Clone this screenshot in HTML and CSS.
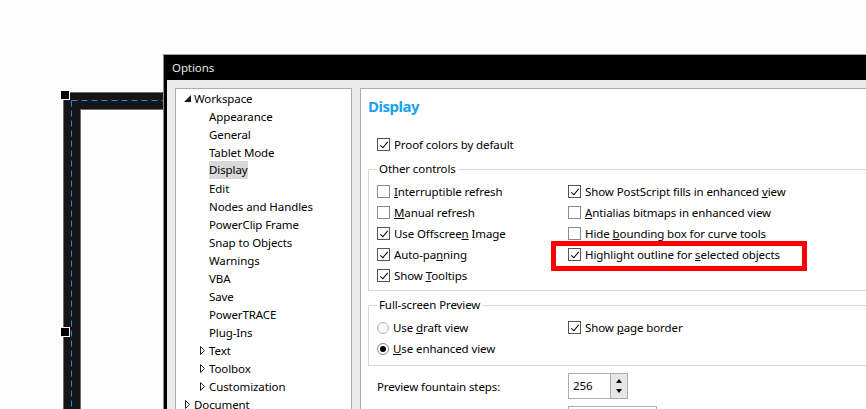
FILE: index.html
```html
<!DOCTYPE html>
<html>
<head>
    <link rel="stylesheet" href="styles.css">
</head>
<body>
    <div class="frame"></div>
    <svg class="frame-path" width="100" height="310">
        <path d="M0.5 0.5 H100 M0.5 0.5 V310" />
    </svg>
    <span class="handle handle-top"></span>
    <span class="handle handle-mid"></span>

    <div class="dialog">
        <div class="titlebar">Options</div>
        <div class="dialog-body">
            <ul class="tree">
                <li>
                    <div class="item">
                        <svg class="toggle open" width="7" height="7"><path d="M7 0V7H0Z" /></svg>Workspace
                    </div>
                    <ul>
                        <li class="item leaf">Appearance</li>
                        <li class="item leaf">General</li>
                        <li class="item leaf">Tablet Mode</li>
                        <li class="item leaf"><span class="selected">Display</span></li>
                        <li class="item leaf">Edit</li>
                        <li class="item leaf">Nodes and Handles</li>
                        <li class="item leaf">PowerClip Frame</li>
                        <li class="item leaf">Snap to Objects</li>
                        <li class="item leaf">Warnings</li>
                        <li class="item leaf">VBA</li>
                        <li class="item leaf">Save</li>
                        <li class="item leaf">PowerTRACE</li>
                        <li class="item leaf">Plug-Ins</li>
                        <li class="item"><svg class="toggle" width="5" height="9"><path d="M0.5 0.5L4.5 4.5L0.5 8.5Z" /></svg>Text</li>
                        <li class="item"><svg class="toggle" width="5" height="9"><path d="M0.5 0.5L4.5 4.5L0.5 8.5Z" /></svg>Toolbox</li>
                        <li class="item"><svg class="toggle" width="5" height="9"><path d="M0.5 0.5L4.5 4.5L0.5 8.5Z" /></svg>Customization</li>
                    </ul>
                </li>
                <li>
                    <div class="item"><svg class="toggle" width="5" height="9"><path d="M0.5 0.5L4.5 4.5L0.5 8.5Z" /></svg>Document</div>
                </li>
            </ul>

            <div class="page">
                <h1>Display</h1>
                <label class="row proof"><span class="cb checked"></span><span>Proof colors by default</span></label>

                <fieldset>
                    <legend>Other controls</legend>
                    <div class="cols">
                        <div class="col">
                            <label class="row"><span class="cb"></span><span><u>I</u>nterruptible refresh</span></label>
                            <label class="row"><span class="cb"></span><span><u>M</u>anual refresh</span></label>
                            <label class="row"><span class="cb checked"></span><span>Use Offscree<u>n</u> Image</span></label>
                            <label class="row"><span class="cb checked"></span><span>Auto-pa<u>n</u>ning</span></label>
                            <label class="row"><span class="cb checked"></span><span>Show <u>T</u>ooltips</span></label>
                        </div>
                        <div class="col">
                            <label class="row"><span class="cb checked"></span><span>Show PostScript fills in enhanced <u>v</u>iew</span></label>
                            <label class="row"><span class="cb"></span><span><u>A</u>ntialias bitmaps in enhanced view</span></label>
                            <label class="row"><span class="cb"></span><span>Hide <u>b</u>ounding box for curve tools</span></label>
                            <label class="row"><span class="cb checked"></span><span>Highlight outline for <u>s</u>elected objects</span></label>
                        </div>
                    </div>
                </fieldset>

                <fieldset class="preview">
                    <legend>Full-screen Preview</legend>
                    <div class="cols">
                        <div class="col">
                            <label class="row"><span class="rb"></span><span>Use <u>d</u>raft view</span></label>
                            <label class="row"><span class="rb checked"></span><span><u>U</u>se enhanced view</span></label>
                        </div>
                        <div class="col">
                            <label class="row"><span class="cb checked"></span><span>Show <u>p</u>age border</span></label>
                        </div>
                    </div>
                </fieldset>

                <div class="field">
                    <span class="field-label">Preview fountain steps:</span>
                    <div class="spin">
                        <span class="spin-value">256</span>
                        <span class="spin-buttons"><i class="up"></i><i class="down"></i></span>
                    </div>
                </div>
                <div class="field next">
                    <span class="field-label"></span>
                    <div class="box"></div>
                </div>
            </div>
        </div>
    </div>

    <div class="callout"></div>
</body>
</html>
```

FILE: styles.css
```css
body {
    margin: 0;
    height: 409px;
    overflow: hidden;
    position: relative;
    background-color: #fdfdfd;
    font-family: "Noto Sans", sans-serif;
    font-size: 11.5px;
    letter-spacing: -0.1px;
    color: #000;
}

/* drawing canvas behind the dialog */
.frame {
    position: absolute;
    left: 63px;
    top: 92px;
    width: 300px;
    height: 400px;
    border: 17px solid #151515;
    outline: 1px solid #6e6e6e;
    outline-offset: -1px;
    box-shadow: inset 0 0 0 1px #6e6e6e;
}
.frame-path {
    position: absolute;
    left: 71px;
    top: 100px;
}
.frame-path path {
    fill: none;
    stroke: #1e8ae6;
    stroke-width: 1;
    stroke-dasharray: 6 4;
}
.handle {
    position: absolute;
    width: 8px;
    height: 8px;
    background-color: #000;
    border: 1px solid #fff;
}
.handle-top {
    left: 60px;
    top: 90px;
}
.handle-mid {
    left: 60px;
    top: 327px;
}

/* options window */
.dialog {
    position: absolute;
    left: 163px;
    top: 54px;
    width: 760px;
    height: 400px;
    background-color: #000;
    border-top: 1px solid #a3a3a3;
    border-left: 1px solid #8c8c8c;
    display: flex;
    flex-direction: column;
}
.titlebar {
    height: 25px;
    line-height: 25px;
    padding-left: 8px;
    color: #e4e4e4;
}
.dialog-body {
    flex: 1;
    margin-left: 3px;
    background-color: #ebebeb;
    display: flex;
    gap: 8px;
    padding: 8px 0 0 8px;
}

.tree {
    width: 177px;
    height: 340px;
    box-sizing: border-box;
    margin: 0;
    padding: 0;
    list-style: none;
    background-color: #fff;
    border: 1px solid #acacac;
}
.tree ul {
    margin: 0;
    padding: 0;
    list-style: none;
}
.item {
    display: flex;
    align-items: center;
    height: 18px;
    padding-left: 9px;
    white-space: nowrap;
}
.tree ul .item {
    padding-left: 24px;
}
.tree ul .item.leaf {
    padding-left: 33px;
}
.toggle {
    margin-right: 4px;
    flex: none;
}
.toggle path {
    fill: #fff;
    stroke: #222;
}
.toggle.open {
    margin-left: -1px;
    margin-right: 3px;
}
.toggle.open path {
    fill: #1a1a1a;
    stroke: none;
}
.selected {
    background-color: #d9d9d9;
    line-height: 18px;
}

.page {
    flex: 1;
    height: 340px;
    padding-left: 7px;
    background-color: #fff;
    border: 1px solid #acacac;
}
.page h1 {
    margin: 7px 0 0;
    font-size: 15px;
    line-height: 20px;
    letter-spacing: -0.5px;
    color: #17a1ee;
}

.row {
    display: flex;
    align-items: center;
    height: 21px;
    gap: 4px;
    white-space: nowrap;
}
.proof {
    margin: 18px 0 0 9px;
}
.cb {
    width: 13px;
    height: 13px;
    box-sizing: border-box;
    border: 1px solid #8a8a8a;
    background-color: #fff;
    position: relative;
    flex: none;
}
.cb.checked {
    border-color: #555;
}
.cb.checked:after {
    content: "";
    position: absolute;
    left: 3.5px;
    top: 0.5px;
    width: 3px;
    height: 7px;
    border: solid #000;
    border-width: 0 1.6px 1.6px 0;
    transform: rotate(40deg);
}
.rb {
    width: 12px;
    height: 12px;
    box-sizing: border-box;
    border: 1px solid #b4b4b4;
    border-radius: 50%;
    background-color: #fff;
    display: flex;
    align-items: center;
    justify-content: center;
    flex: none;
}
.rb.checked {
    border-color: #8a8a8a;
}
.rb.checked:after {
    content: "";
    width: 6px;
    height: 6px;
    border-radius: 50%;
    background-color: #000;
}

fieldset {
    margin: 6px 0 0;
    padding: 4px 0 4px 8px;
    min-width: 0;
    border: 1px solid #d7d7d7;
}
fieldset.preview {
    padding-bottom: 6px;
}
legend {
    padding: 0 2px;
    line-height: 16px;
}
.cols {
    display: flex;
}
.col {
    width: 191px;
    flex: none;
}

.field {
    display: flex;
    align-items: center;
    margin: 7px 0 0 9px;
}
.field-label {
    width: 191px;
    flex: none;
}
.spin {
    display: flex;
    height: 26px;
    width: 60px;
    box-sizing: border-box;
    border: 1px solid #acacac;
}
.spin-value {
    flex: 1;
    padding-left: 4px;
    line-height: 24px;
}
.spin-buttons {
    width: 16px;
    background-color: #e6e6e6;
    border-left: 1px solid #acacac;
    display: flex;
    flex-direction: column;
    align-items: center;
    justify-content: center;
    gap: 6px;
}
.spin-buttons i {
    width: 0;
    height: 0;
    border-left: 3px solid transparent;
    border-right: 3px solid transparent;
}
.spin-buttons .up {
    border-bottom: 4px solid #000;
}
.spin-buttons .down {
    border-top: 4px solid #000;
}
.field.next {
    margin-top: 7px;
}
.box {
    width: 87px;
    height: 24px;
    border: 1px solid #acacac;
}

/* red annotation box */
.callout {
    position: absolute;
    left: 551px;
    top: 241px;
    width: 256px;
    height: 30px;
    box-sizing: border-box;
    border: 5px solid #f00;
}
```
